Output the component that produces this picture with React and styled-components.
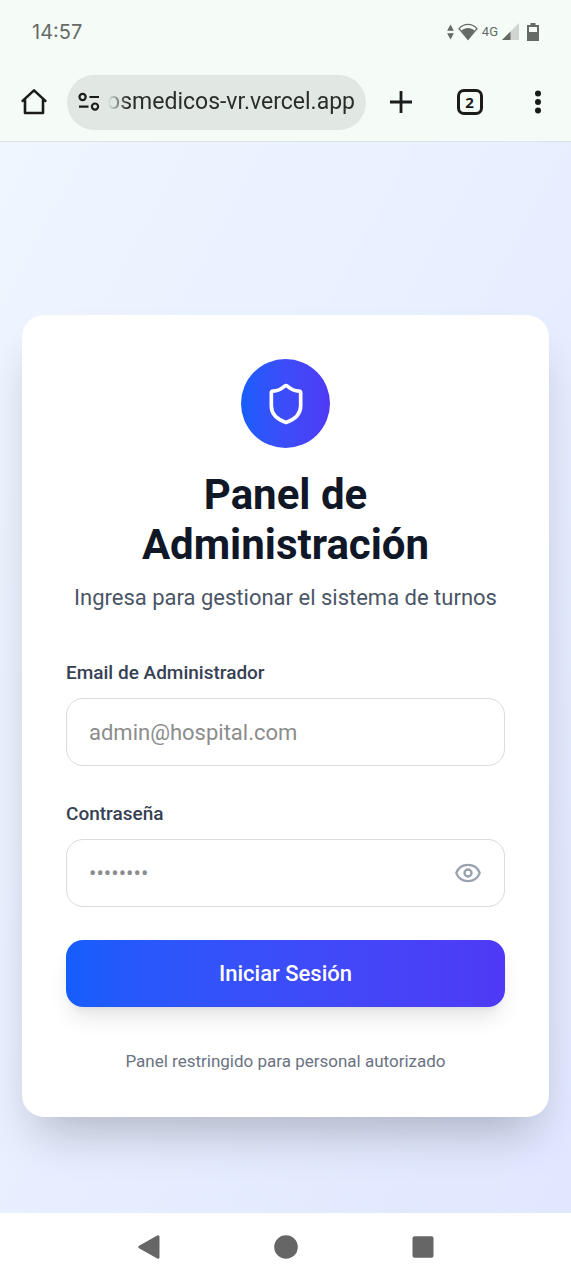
import React, { useState } from "react";
import styled, { createGlobalStyle } from "styled-components";
import { Eye, Shield } from "lucide-react";

const GlobalStyle = createGlobalStyle`
  *, *::before, *::after { box-sizing: border-box; }
  body { margin: 0; font-family: Roboto, "Liberation Sans", sans-serif; background: #ffffff; }
  h1, p { margin: 0; }
  button, input { font: inherit; color: inherit; }
  svg { display: block; }
`;

const Screen = styled.div`
  min-height: 100vh;
  display: flex;
  flex-direction: column;
`;

const BrowserChrome = styled.header`
  background: #f5fbf7;
  border-bottom: 1px solid #dde2e3;
`;

const StatusBar = styled.div`
  height: 63px;
  padding: 0 32px;
  display: flex;
  align-items: center;
  justify-content: space-between;
  color: #666a67;
`;

const Clock = styled.time`
  font-family: Inter, sans-serif;
  font-size: 20px;
  line-height: 24px;
`;

const StatusIcons = styled.div`
  display: flex;
  align-items: center;
  gap: 4px;
`;

const Network = styled.span`
  font-size: 13px;
  line-height: 16px;
`;

const Toolbar = styled.div`
  height: 78px;
  display: flex;
  align-items: center;
  color: #191c1a;
`;

const PlainButton = styled.button`
  flex: none;
  display: flex;
  align-items: center;
  justify-content: center;
  padding: 0;
  border: 0;
  background: none;
  cursor: pointer;
`;

const ToolButton = styled(PlainButton)`
  width: ${(p) => (p.$narrow ? 67 : 69)}px;
  height: 56px;
`;

const AddressBar = styled.div`
  flex: 1;
  min-width: 0;
  height: 55px;
  padding: 0 11px;
  display: flex;
  align-items: center;
  gap: 8px;
  border-radius: 28px;
  background: #e1e8e3;
`;

const AddressText = styled.div`
  flex: 1;
  min-width: 0;
  display: flex;
  justify-content: flex-end;
  overflow: hidden;
  white-space: nowrap;
  font-size: 23px;
  line-height: 32px;
  color: #2a2e2b;
  mask-image: linear-gradient(to right, transparent 0, #000 20px);
`;

const TabCount = styled.span`
  width: 26px;
  height: 26px;
  display: flex;
  align-items: center;
  justify-content: center;
  border: 3px solid #191c1a;
  border-radius: 7px;
  font-family: "Open Sans", sans-serif;
  font-size: 15px;
  font-weight: 700;
  line-height: 20px;
`;

const Page = styled.main`
  flex: 1;
  padding: 173px 22px 95px;
  display: flex;
  flex-direction: column;
  align-items: center;
  background: linear-gradient(to bottom right in oklab, #eff6ff, #e0e7ff);
`;

const Card = styled.section`
  width: 100%;
  max-width: 622px;
  padding: 44px;
  border-radius: 22px;
  background: #ffffff;
  box-shadow: 0 28px 48px -14px rgba(0, 0, 0, 0.24);
`;

const Intro = styled.div`
  display: flex;
  flex-direction: column;
  align-items: center;
  margin-bottom: 44px;
  text-align: center;
`;

const Badge = styled.div`
  width: 89px;
  height: 89px;
  display: flex;
  align-items: center;
  justify-content: center;
  margin-bottom: 22px;
  border-radius: 50%;
  color: #ffffff;
  background: linear-gradient(to right in oklab, #155dfc, #4f39f6);
`;

const Title = styled.h1`
  margin-bottom: 11px;
  font-size: 42px;
  font-weight: 700;
  line-height: 50px;
  color: #101828;
`;

const Subtitle = styled.p`
  font-size: 22px;
  line-height: 33px;
  color: #4a5565;
`;

const Form = styled.form`
  display: flex;
  flex-direction: column;
  gap: 33px;
`;

const Field = styled.div`
  display: flex;
  flex-direction: column;
  gap: 10px;
`;

const Label = styled.label`
  font-size: 19px;
  font-weight: 500;
  line-height: 30px;
  color: #364153;
`;

const InputBox = styled.div`
  height: 68px;
  padding: 0 22px;
  display: flex;
  align-items: center;
  gap: 11px;
  border: 1px solid #dadbde;
  border-radius: 17px;

  &:focus-within { border-color: #155dfc; }
`;

const Input = styled.input`
  flex: 1;
  min-width: 0;
  height: 33px;
  padding: 0;
  border: 0;
  outline: 0;
  background: none;
  font-size: 22px;
  color: #101828;

  &::placeholder { color: #8c8c8c; opacity: 1; }
`;

const RevealButton = styled(PlainButton)`
  color: #99a1af;
`;

const SubmitButton = styled.button`
  height: 67px;
  border: 0;
  border-radius: 17px;
  color: #ffffff;
  background: linear-gradient(to right in oklab, #155dfc, #4f39f6);
  box-shadow: 0 14px 21px -4px rgba(0, 0, 0, 0.1), 0 6px 8px -6px rgba(0, 0, 0, 0.1);
  font-size: 22px;
  font-weight: 500;
  line-height: 33px;
  cursor: pointer;
`;

const Note = styled.p`
  margin-top: 42px;
  font-size: 17px;
  line-height: 24px;
  text-align: center;
  color: #6a7282;
`;

const SystemNav = styled.nav`
  height: 67px;
  display: flex;
  align-items: center;
  justify-content: center;
  gap: 89px;
  color: #666666;
`;

const NavButton = styled(PlainButton)`
  width: 48px;
  height: 48px;
`;

function HomeIcon() {
  return (
    <svg width="28" height="28" viewBox="0 0 28 28" fill="none" stroke="currentColor" strokeWidth="2.6" strokeLinejoin="round" strokeLinecap="round">
      <path d="M2.6 12.9 14 2.4l11.4 10.5M5 11.5v13.5h18V11.5" />
    </svg>
  );
}

function SiteSettingsIcon() {
  return (
    <svg width="22" height="20" viewBox="0 0 22 20" fill="none" stroke="currentColor" strokeWidth="2.2">
      <circle cx="4.6" cy="5" r="3.1" />
      <path d="M11.5 5H21M1 14.6h9.5" />
      <circle cx="17" cy="14.6" r="3.1" />
    </svg>
  );
}

function DataArrowsIcon() {
  return (
    <svg width="7" height="16" viewBox="0 0 7 16" fill="currentColor">
      <path d="M3.5 0.5 6.9 6.8H.1zM3.5 15.5.1 9.2h6.8z" />
    </svg>
  );
}

function WifiIcon() {
  return (
    <svg width="20" height="18" viewBox="0 0 20 18">
      <path d="M1 5.6C6-.1 14-.1 19 5.6L10 16.4z" fill="none" stroke="currentColor" strokeWidth="1.4" strokeLinejoin="round" />
      <path d="M3.4 7.6C7 4 13 4 16.6 7.6L10 16.6z" fill="currentColor" />
    </svg>
  );
}

function SignalIcon() {
  return (
    <svg width="17" height="17" viewBox="0 0 17 17">
      <path d="M17 0v17H0z" fill="#d0d5d1" />
      <path d="M8.5 8.5V17H0z" fill="currentColor" />
    </svg>
  );
}

function BatteryIcon() {
  return (
    <svg width="12" height="18" viewBox="0 0 12 18">
      <path d="M3.5 0h5v2H12v16H0V2h3.5z" fill="currentColor" />
      <path d="M2 4h8v5H2z" fill="#f5fbf7" />
    </svg>
  );
}

function PlusIcon() {
  return (
    <svg width="24" height="24" viewBox="0 0 24 24" fill="none" stroke="currentColor" strokeWidth="2.8">
      <path d="M12 1v22M1 12h22" />
    </svg>
  );
}

function MoreIcon() {
  return (
    <svg width="6" height="24" viewBox="0 0 6 24" fill="currentColor">
      <circle cx="3" cy="3.5" r="3" />
      <circle cx="3" cy="12" r="3" />
      <circle cx="3" cy="20.5" r="3" />
    </svg>
  );
}

function BackIcon() {
  return (
    <svg width="24" height="26" viewBox="0 0 24 26" fill="currentColor" stroke="currentColor" strokeWidth="3" strokeLinejoin="round">
      <path d="M2.8 13 21 2.8v20.4z" />
    </svg>
  );
}

function HomeCircleIcon() {
  return (
    <svg width="24" height="26" viewBox="0 0 24 26" fill="currentColor">
      <circle cx="12" cy="13" r="11.8" />
    </svg>
  );
}

function RecentsIcon() {
  return (
    <svg width="22" height="24" viewBox="0 0 22 24" fill="currentColor">
      <rect x="0.5" y="1.2" width="21" height="21.6" rx="2" />
    </svg>
  );
}

export default function App() {
  const [visible, setVisible] = useState(false);

  return (
    <Screen>
      <GlobalStyle />
      <BrowserChrome>
        <StatusBar>
          <Clock>14:57</Clock>
          <StatusIcons>
            <DataArrowsIcon />
            <WifiIcon />
            <Network>4G</Network>
            <SignalIcon />
            <span />
            <BatteryIcon />
          </StatusIcons>
        </StatusBar>
        <Toolbar>
          <ToolButton $narrow type="button" aria-label="Inicio">
            <HomeIcon />
          </ToolButton>
          <AddressBar>
            <SiteSettingsIcon />
            <AddressText>osmedicos-vr.vercel.app</AddressText>
          </AddressBar>
          <ToolButton type="button" aria-label="Nueva pestaña">
            <PlusIcon />
          </ToolButton>
          <ToolButton type="button" aria-label="Pestañas">
            <TabCount>2</TabCount>
          </ToolButton>
          <ToolButton $narrow type="button" aria-label="Más opciones">
            <MoreIcon />
          </ToolButton>
        </Toolbar>
      </BrowserChrome>

      <Page>
        <Card>
          <Intro>
            <Badge>
              <Shield size={44} strokeWidth={2} />
            </Badge>
            <Title>Panel de Administración</Title>
            <Subtitle>Ingresa para gestionar el sistema de turnos</Subtitle>
          </Intro>
          <Form onSubmit={(e) => e.preventDefault()}>
            <Field>
              <Label htmlFor="email">Email de Administrador</Label>
              <InputBox>
                <Input id="email" type="email" placeholder="admin@hospital.com" />
              </InputBox>
            </Field>
            <Field>
              <Label htmlFor="password">Contraseña</Label>
              <InputBox>
                <Input id="password" type={visible ? "text" : "password"} placeholder="••••••••" />
                <RevealButton type="button" aria-label="Mostrar contraseña" onClick={() => setVisible(!visible)}>
                  <Eye size={28} strokeWidth={2} />
                </RevealButton>
              </InputBox>
            </Field>
            <SubmitButton type="submit">Iniciar Sesión</SubmitButton>
          </Form>
          <Note>Panel restringido para personal autorizado</Note>
        </Card>
      </Page>

      <SystemNav>
        <NavButton type="button" aria-label="Atrás">
          <BackIcon />
        </NavButton>
        <NavButton type="button" aria-label="Pantalla de inicio">
          <HomeCircleIcon />
        </NavButton>
        <NavButton type="button" aria-label="Recientes">
          <RecentsIcon />
        </NavButton>
      </SystemNav>
    </Screen>
  );
}
